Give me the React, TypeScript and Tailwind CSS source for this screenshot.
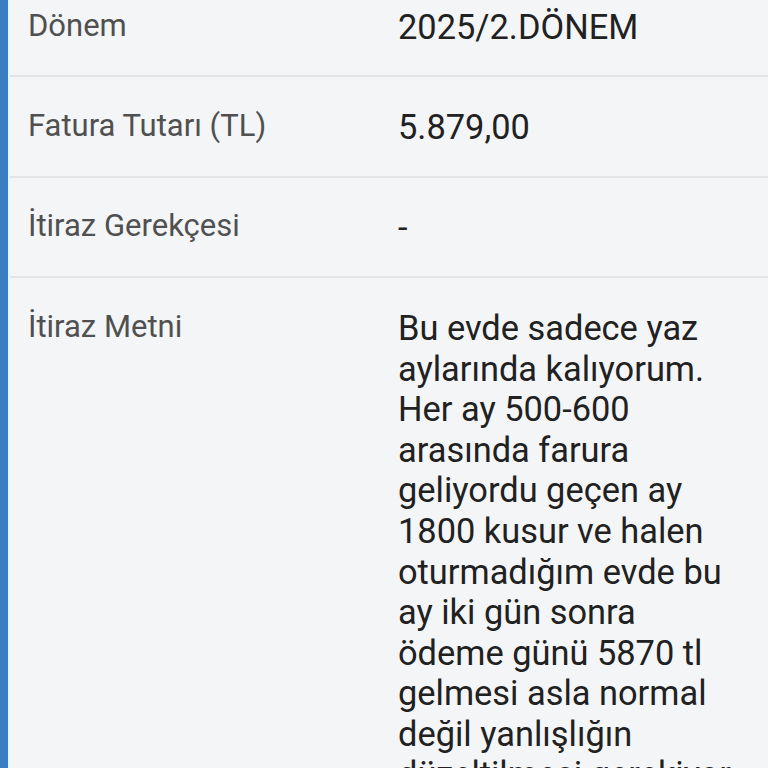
import React from "react";

const rows: { label: string; value: string }[] = [
  { label: "Dönem", value: "2025/2.DÖNEM" },
  { label: "Fatura Tutarı (TL)", value: "5.879,00" },
  { label: "İtiraz Gerekçesi", value: "-" },
  {
    label: "İtiraz Metni",
    value:
      "Bu evde sadece yaz aylarında kalıyorum. Her ay 500-600 arasında farura geliyordu geçen ay 1800 kusur ve halen oturmadığım evde bu ay iki gün sonra ödeme günü 5870 tl gelmesi asla normal değil yanlışlığın düzeltilmesi gerekiyor",
  },
];

export default function App() {
  return (
    <div
      className="flex h-[768px] w-full overflow-hidden bg-[#f4f5f7]"
      style={{ fontFamily: "Roboto, 'Noto Sans', sans-serif" }}
    >
      <div className="w-[8px] shrink-0 bg-[#3a7ec2]" />
      <div className="w-[2px] shrink-0 bg-[#eaf3fb]" />
      <div className="-mt-[23px] flex-1">
        {rows.map((r) => (
          <div
            key={r.label}
            className="flex border-b-2 border-[#e3e4e7] pb-[28.4px] pt-[29.5px]"
          >
            <div className="w-[388px] shrink-0 pl-[18px] text-[31px] leading-[38px] text-[#505050]">
              {r.label}
            </div>
            <div className="flex-1 pr-[30px] text-[34.4px] leading-[40.6px] text-[#212121]">
              {r.value}
            </div>
          </div>
        ))}
      </div>
    </div>
  );
}
